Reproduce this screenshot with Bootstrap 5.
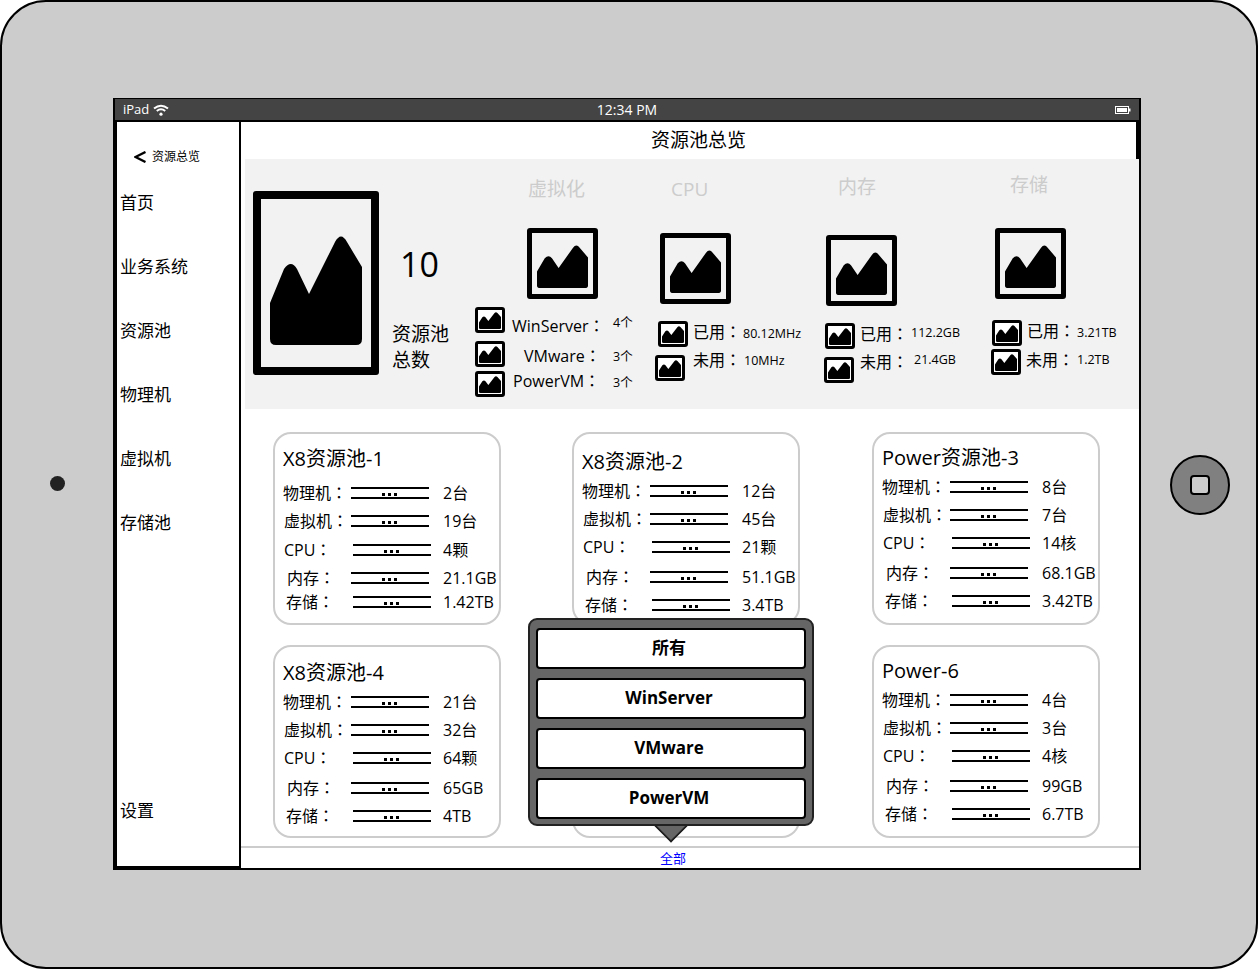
<!DOCTYPE html>
<html lang="zh-CN">
<head>
  <meta charset="UTF-8" />
  <meta name="viewport" content="width=device-width, initial-scale=1" />
  <title>资源池总览</title>
  <link href="https://cdn.jsdelivr.net/npm/bootstrap@5.3.0/dist/css/bootstrap.min.css" rel="stylesheet" />
  <style>
    html, body { margin: 0; background: #fff; overflow: hidden; }
    body { font-family: "Open Sans", "Noto Sans CJK SC", sans-serif; color: #000; font-size: 16px; }

    /* device shell */
    .tablet { width: 1258px; height: 969px; background: #ccc; border: 2px solid #000; border-radius: 46px; }
    .tablet-left { width: 111px; }
    .tablet-right { width: 115px; }
    .camera-dot { width: 15px; height: 15px; border-radius: 50%; background: #222; margin-bottom: 2px; }
    .home-btn { width: 60px; height: 60px; border-radius: 50%; background: #808080; border: 2px solid #000; margin-left: 3px; }
    .home-btn span { width: 20px; height: 20px; background: #ccc; border: 2px solid #000; border-radius: 4px; }
    .screen { width: 1028px; height: 772px; margin-top: 96px; flex: none; background: #fff; border: 2px solid #000; border-top-width: 1px; }

    /* status bar */
    .status-row { height: 23px; flex: none; background: #444; color: #fff; font-size: 13px; border-bottom: 2px solid #000; padding: 0 8px; line-height: 21px; }
    .status-row > div { flex: 1 1 0; }
    .status-row .status-time { font-size: 14px; }

    /* side menu */
    .side-menu { width: 126px; border-left: 2px solid #000; border-right: 2px solid #000; border-bottom: 2px solid #000; font-size: 17px; padding-left: 3px; flex: none; }
    .back-row { height: 24px; margin: 23px 0 2px 14px; font-size: 12px; gap: 6px; }
    .side-item { height: 64px; line-height: 64px; color: #000; text-decoration: none; }
    .side-last { margin-top: auto; margin-bottom: 23px; }

    /* main */
    .main-pane { width: 898px; }
    .page-title { height: 37px; line-height: 36px; font-size: 19px; text-align: center; padding-left: 20px; border-right: 3px solid #000; }
    .sum-band { height: 250px; margin-left: 4px; background: #f2f2f2; }

    .pic { border: 4px solid #000; border-radius: 3px; display: flex; flex: none; }
    .pic svg { display: block; width: 100%; height: 100%; }
    .pic-lg { width: 126px; height: 184px; border-width: 8px; padding: 36px 9px 22px; background: #f2f2f2; }
    .pic-md { width: 71px; height: 71px; border-width: 5px; padding: 12px 5px 6px; }
    .pic-sm { width: 30px; height: 26px; border-width: 3px; padding: 2px 1px 1px; background: #fff; }

    .sum-total { width: 230px; padding-left: 8px; padding-top: 32px; flex: none; }
    .total-text { margin-left: 13px; padding-top: 51px; }
    .total-num { height: 44px; line-height: 44px; font-size: 34px; margin-left: 8px; }
    .total-cap { font-size: 19px; line-height: 26px; margin-top: 35px; }

    .sum-col { flex: none; }
    .sum-head { height: 28px; line-height: 28px; font-size: 19px; color: #ccc; }
    .sum-line { height: 26px; }
    .sum-line span { line-height: 26px; height: 26px; white-space: nowrap; display: block; }
    .sum-key { font-size: 16px; padding-top: 1px; font-family: "Open Sans", "Noto Sans CJK TC", sans-serif; font-feature-settings: "locl" 0; }
    .sum-num { font-size: 12.5px; }

    .sc-vm { width: 180px; }
    .sc-vm .sum-head { margin: 16px 0 0 53px; }
    .sc-vm .pic-md { margin: 25px 0 8px 52px; }
    .sc-vm .sum-line + .sum-line { margin-top: 8px; }
    .sc-vm .sum-line + .sum-line + .sum-line { margin-top: 4px; }
    .sc-vm .sum-key { width: 101px; }
    .sc-cpu { width: 169px; }
    .sc-cpu .sum-head { margin: 16px 0 0 16px; }
    .sc-cpu .pic-md { margin: 30px 0 17px 5px; }
    .sc-cpu .sum-line + .sum-line { margin-top: 8px; }
    .sc-mem { width: 167px; }
    .sc-mem .sum-head { margin: 14px 0 0 14px; }
    .sc-mem .pic-md { margin: 34px 0 17px 2px; }
    .sc-mem .sum-line + .sum-line { margin-top: 8px; }
    .sc-disk { width: 148px; }
    .sc-disk .sum-head { margin: 12px 0 0 19px; }
    .sc-disk .pic-md { margin: 29px 0 21px 4px; }
    .sc-disk .sum-line + .sum-line { margin-top: 3px; }

    .l1 { margin-left: 1px; } .l3 { margin-left: 3px; }
    .g2 { margin-left: 2px; } .g3 { margin-left: 3px; } .g5 { margin-left: 5px; } .g6 { margin-left: 6px; }
    .g7 { margin-left: 7px; } .g8 { margin-left: 8px; } .g19 { margin-left: 19px; }
    .w89 { width: 89px !important; } .w100 { width: 100px !important; } .w48 { width: 48px; }
    .dn1 { margin-top: 1px; } .dn3 { margin-top: 3px; } .dn5 { margin-top: 5px; }
    .up1 { margin-top: -1px; } .up2 { margin-top: -2px; } .up3 { margin-top: -3px; } .up4 { margin-top: -4px; }
    .up7 { margin-top: -7px; } .up9 { margin-top: -9px; } .up10 { margin-top: -10px; }

    /* pool cards */
    .pool-grid { display: grid; grid-template-columns: 228px 229px 228px; column-gap: 71px; row-gap: 20px; margin: 23px 0 0 32px; }
    .pool-box { width: 228px; height: 193px; border: 2px solid #ccc; border-radius: 18px; padding: 9px 0 0 8px; background: #fff; }
    .pb-10 { padding-top: 10px; } .pb-11 { padding-top: 11px; } .pb-13 { padding-top: 13px; }
    .pool-title { height: 28px; line-height: 30px; font-size: 20px; margin-bottom: 2px; }
    .pool-line { height: 28px; display: flex; align-items: center; white-space: nowrap; }
    .pool-key { width: 68px; flex: none; font-family: "Open Sans", "Noto Sans CJK TC", sans-serif; font-feature-settings: "locl" 0; }
    .pool-val { margin-left: 14px; }
    .pool-line:nth-child(3) .pool-key { padding-left: 1px; }
    .pool-line:nth-child(4) .pool-key { padding-left: 1px; width: 70px; }
    .pool-line:nth-child(4) .pool-val { margin-left: 12px; }
    .pool-line:nth-child(5) { margin-top: 2px; }
    .pool-line:nth-child(5) .pool-key { padding-left: 4px; }
    .pool-line:nth-child(6) .pool-key { padding-left: 3px; width: 70px; }
    .pool-line:nth-child(6) .pool-val { margin-left: 12px; }
    .pool-one .pool-title { margin-bottom: 7px; }
    .pool-one .pool-line:nth-child(4) { margin-top: 1px; }
    .pool-one .pool-line:nth-child(5) { margin-top: 0; }
    .pool-one .pool-line:nth-child(6) { margin-top: -4px; }

    .pipe { width: 78px; height: 12px; flex: none; border-top: 2px solid #000; border-bottom: 2px solid #000; position: relative; }
    .pipe::after { content: ""; position: absolute; left: 37px; top: 4px; width: 3px; height: 3px; background: #000; box-shadow: -6px 0 #000, 6px 0 #000; }

    .foot-link { height: 22px; margin-top: auto; border-top: 2px solid #ccc; text-align: center; font-size: 13px; line-height: 20px; padding-right: 34px; }
    .foot-link a { color: #00f; text-decoration: none; }

    /* filter popup */
    .filter-pop { position: absolute; left: 287px; top: 496px; width: 286px; height: 208px; background: #666; border: 2px solid #222; border-radius: 9px; padding: 8px 6px 0; z-index: 5; }
    .filter-pop::after { content: ""; position: absolute; left: 129px; bottom: -14px; width: 24px; height: 24px; background: #666; border-right: 2px solid #222; border-bottom: 2px solid #222; transform: rotate(45deg); clip-path: polygon(100% 0, 100% 100%, 0 100%); }
    .pick-btn { display: block; width: 100%; height: 41px; margin-bottom: 9px; padding: 0 4px 2px 0; background: #fff; border: 2px solid #000; border-radius: 4px; font-family: inherit; font-weight: 700; font-size: 17px; color: #000; }
  </style>
</head>
<body>

<svg width="0" height="0" class="position-absolute">
  <defs>
    <path id="hill" d="M0 68 L14 34 Q21 24 27 34 L39 59 L65 7 Q71 -4 77 7 L92 32 V104 Q92 110 86 110 H6 Q0 110 0 104 Z" />
  </defs>
</svg>

<div class="tablet d-flex align-items-start">
  <div class="tablet-left d-flex justify-content-center align-self-center"><div class="camera-dot"></div></div>

  <div class="screen d-flex flex-column">
    <!-- Status bar -->
    <div class="status-row d-flex align-items-center">
      <div class="d-flex align-items-center gap-1">
        <span>iPad</span>
        <svg width="16" height="12" viewBox="0 0 16 12" fill="none" stroke="#fff" stroke-width="2">
          <path d="M1 4.5 Q8 -1 15 4.5" />
          <path d="M3.8 7 Q8 3.6 12.2 7" />
          <circle cx="8" cy="10.2" r="1.6" fill="#fff" stroke="none" />
        </svg>
      </div>
      <div class="status-time text-center">12:34 PM</div>
      <div class="d-flex justify-content-end">
        <svg width="16" height="8" viewBox="0 0 16 8">
          <rect x="0.5" y="0.5" width="13" height="7" fill="none" stroke="#fff" />
          <rect x="2" y="2" width="10" height="4" fill="#fff" />
          <rect x="14" y="2.5" width="1.5" height="3" fill="#fff" />
        </svg>
      </div>
    </div>

    <div class="d-flex flex-grow-1">
      <!-- Side menu -->
      <div class="side-menu d-flex flex-column">
        <div class="back-row d-flex align-items-center">
          <svg width="12" height="12" viewBox="0 0 12 12" fill="none" stroke="#000" stroke-width="2.4"><path d="M11.5 1 L1.5 6 L11.5 11" /></svg>
          <span>资源总览</span>
        </div>
        <a class="side-item" href="#">首页</a>
        <a class="side-item" href="#">业务系统</a>
        <a class="side-item" href="#">资源池</a>
        <a class="side-item" href="#">物理机</a>
        <a class="side-item" href="#">虚拟机</a>
        <a class="side-item" href="#">存储池</a>
        <a class="side-item side-last" href="#">设置</a>
      </div>

      <!-- Main -->
      <div class="main-pane d-flex flex-column position-relative">
        <div class="page-title">资源池总览</div>

        <div class="sum-band d-flex">
          <div class="sum-total d-flex">
            <div class="pic pic-lg"><svg viewBox="0 0 92 110" preserveAspectRatio="none"><use href="#hill" /></svg></div>
            <div class="total-text">
              <div class="total-num">10</div>
              <div class="total-cap">资源池<br>总数</div>
            </div>
          </div>

          <div class="sum-col sc-vm">
            <div class="sum-head">虚拟化</div>
            <div class="pic pic-md"><svg viewBox="0 0 92 110" preserveAspectRatio="none"><use href="#hill" /></svg></div>
            <div class="sum-line d-flex">
              <div class="pic pic-sm"><svg viewBox="0 0 92 110" preserveAspectRatio="none"><use href="#hill" /></svg></div>
              <span class="sum-key g7 dn5">WinServer：</span><span class="sum-num dn3">4个</span>
            </div>
            <div class="sum-line d-flex">
              <div class="pic pic-sm"><svg viewBox="0 0 92 110" preserveAspectRatio="none"><use href="#hill" /></svg></div>
              <span class="sum-key g19 w89 dn1">VMware：</span><span class="sum-num dn3">3个</span>
            </div>
            <div class="sum-line d-flex">
              <div class="pic pic-sm"><svg viewBox="0 0 92 110" preserveAspectRatio="none"><use href="#hill" /></svg></div>
              <span class="sum-key g8 w100 up4">PowerVM：</span><span class="sum-num up1">3个</span>
            </div>
          </div>

          <div class="sum-col sc-cpu">
            <div class="sum-head">CPU</div>
            <div class="pic pic-md"><svg viewBox="0 0 92 110" preserveAspectRatio="none"><use href="#hill" /></svg></div>
            <div class="sum-line d-flex l3">
              <div class="pic pic-sm"><svg viewBox="0 0 92 110" preserveAspectRatio="none"><use href="#hill" /></svg></div>
              <span class="sum-key g5 w48 up3">已用：</span><span class="sum-num g2">80.12MHz</span>
            </div>
            <div class="sum-line d-flex">
              <div class="pic pic-sm"><svg viewBox="0 0 92 110" preserveAspectRatio="none"><use href="#hill" /></svg></div>
              <span class="sum-key g8 w48 up9">未用：</span><span class="sum-num g3 up7">10MHz</span>
            </div>
          </div>

          <div class="sum-col sc-mem">
            <div class="sum-head">内存</div>
            <div class="pic pic-md"><svg viewBox="0 0 92 110" preserveAspectRatio="none"><use href="#hill" /></svg></div>
            <div class="sum-line d-flex l1">
              <div class="pic pic-sm"><svg viewBox="0 0 92 110" preserveAspectRatio="none"><use href="#hill" /></svg></div>
              <span class="sum-key g5 w48 up3">已用：</span><span class="sum-num g3 up3">112.2GB</span>
            </div>
            <div class="sum-line d-flex">
              <div class="pic pic-sm"><svg viewBox="0 0 92 110" preserveAspectRatio="none"><use href="#hill" /></svg></div>
              <span class="sum-key g6 w48 up9">未用：</span><span class="sum-num g6 up10">21.4GB</span>
            </div>
          </div>

          <div class="sum-col sc-disk">
            <div class="sum-head">存储</div>
            <div class="pic pic-md"><svg viewBox="0 0 92 110" preserveAspectRatio="none"><use href="#hill" /></svg></div>
            <div class="sum-line d-flex l1">
              <div class="pic pic-sm"><svg viewBox="0 0 92 110" preserveAspectRatio="none"><use href="#hill" /></svg></div>
              <span class="sum-key g5 w48 up3">已用：</span><span class="sum-num g2">3.21TB</span>
            </div>
            <div class="sum-line d-flex">
              <div class="pic pic-sm"><svg viewBox="0 0 92 110" preserveAspectRatio="none"><use href="#hill" /></svg></div>
              <span class="sum-key g5 w48 up3">未用：</span><span class="sum-num g3 up2">1.2TB</span>
            </div>
          </div>
        </div>

        <!-- Pool cards -->
        <div class="pool-grid">
          <div class="pool-box pool-one pb-10">
            <div class="pool-title">X8资源池-1</div>
            <div class="pool-line"><span class="pool-key">物理机：</span><span class="pipe"></span><span class="pool-val">2台</span></div>
            <div class="pool-line"><span class="pool-key">虚拟机：</span><span class="pipe"></span><span class="pool-val">19台</span></div>
            <div class="pool-line"><span class="pool-key">CPU：</span><span class="pipe"></span><span class="pool-val">4颗</span></div>
            <div class="pool-line"><span class="pool-key">内存：</span><span class="pipe"></span><span class="pool-val">21.1GB</span></div>
            <div class="pool-line"><span class="pool-key">存储：</span><span class="pipe"></span><span class="pool-val">1.42TB</span></div>
          </div>
          <div class="pool-box pb-13">
            <div class="pool-title">X8资源池-2</div>
            <div class="pool-line"><span class="pool-key">物理机：</span><span class="pipe"></span><span class="pool-val">12台</span></div>
            <div class="pool-line"><span class="pool-key">虚拟机：</span><span class="pipe"></span><span class="pool-val">45台</span></div>
            <div class="pool-line"><span class="pool-key">CPU：</span><span class="pipe"></span><span class="pool-val">21颗</span></div>
            <div class="pool-line"><span class="pool-key">内存：</span><span class="pipe"></span><span class="pool-val">51.1GB</span></div>
            <div class="pool-line"><span class="pool-key">存储：</span><span class="pipe"></span><span class="pool-val">3.4TB</span></div>
          </div>
          <div class="pool-box">
            <div class="pool-title">Power资源池-3</div>
            <div class="pool-line"><span class="pool-key">物理机：</span><span class="pipe"></span><span class="pool-val">8台</span></div>
            <div class="pool-line"><span class="pool-key">虚拟机：</span><span class="pipe"></span><span class="pool-val">7台</span></div>
            <div class="pool-line"><span class="pool-key">CPU：</span><span class="pipe"></span><span class="pool-val">14核</span></div>
            <div class="pool-line"><span class="pool-key">内存：</span><span class="pipe"></span><span class="pool-val">68.1GB</span></div>
            <div class="pool-line"><span class="pool-key">存储：</span><span class="pipe"></span><span class="pool-val">3.42TB</span></div>
          </div>
          <div class="pool-box pb-11">
            <div class="pool-title">X8资源池-4</div>
            <div class="pool-line"><span class="pool-key">物理机：</span><span class="pipe"></span><span class="pool-val">21台</span></div>
            <div class="pool-line"><span class="pool-key">虚拟机：</span><span class="pipe"></span><span class="pool-val">32台</span></div>
            <div class="pool-line"><span class="pool-key">CPU：</span><span class="pipe"></span><span class="pool-val">64颗</span></div>
            <div class="pool-line"><span class="pool-key">内存：</span><span class="pipe"></span><span class="pool-val">65GB</span></div>
            <div class="pool-line"><span class="pool-key">存储：</span><span class="pipe"></span><span class="pool-val">4TB</span></div>
          </div>
          <div class="pool-box"></div>
          <div class="pool-box">
            <div class="pool-title">Power-6</div>
            <div class="pool-line"><span class="pool-key">物理机：</span><span class="pipe"></span><span class="pool-val">4台</span></div>
            <div class="pool-line"><span class="pool-key">虚拟机：</span><span class="pipe"></span><span class="pool-val">3台</span></div>
            <div class="pool-line"><span class="pool-key">CPU：</span><span class="pipe"></span><span class="pool-val">4核</span></div>
            <div class="pool-line"><span class="pool-key">内存：</span><span class="pipe"></span><span class="pool-val">99GB</span></div>
            <div class="pool-line"><span class="pool-key">存储：</span><span class="pipe"></span><span class="pool-val">6.7TB</span></div>
          </div>
        </div>

        <div class="foot-link"><a href="#">全部</a></div>

        <!-- Filter popup -->
        <div class="filter-pop">
          <button class="btn pick-btn" type="button">所有</button>
          <button class="btn pick-btn" type="button">WinServer</button>
          <button class="btn pick-btn" type="button">VMware</button>
          <button class="btn pick-btn" type="button">PowerVM</button>
        </div>
      </div>
    </div>
  </div>

  <div class="tablet-right d-flex justify-content-center align-self-center"><div class="home-btn d-flex align-items-center justify-content-center"><span></span></div></div>
</div>

<script src="https://cdn.jsdelivr.net/npm/bootstrap@5.3.0/dist/js/bootstrap.bundle.min.js"></script>
</body>
</html>
